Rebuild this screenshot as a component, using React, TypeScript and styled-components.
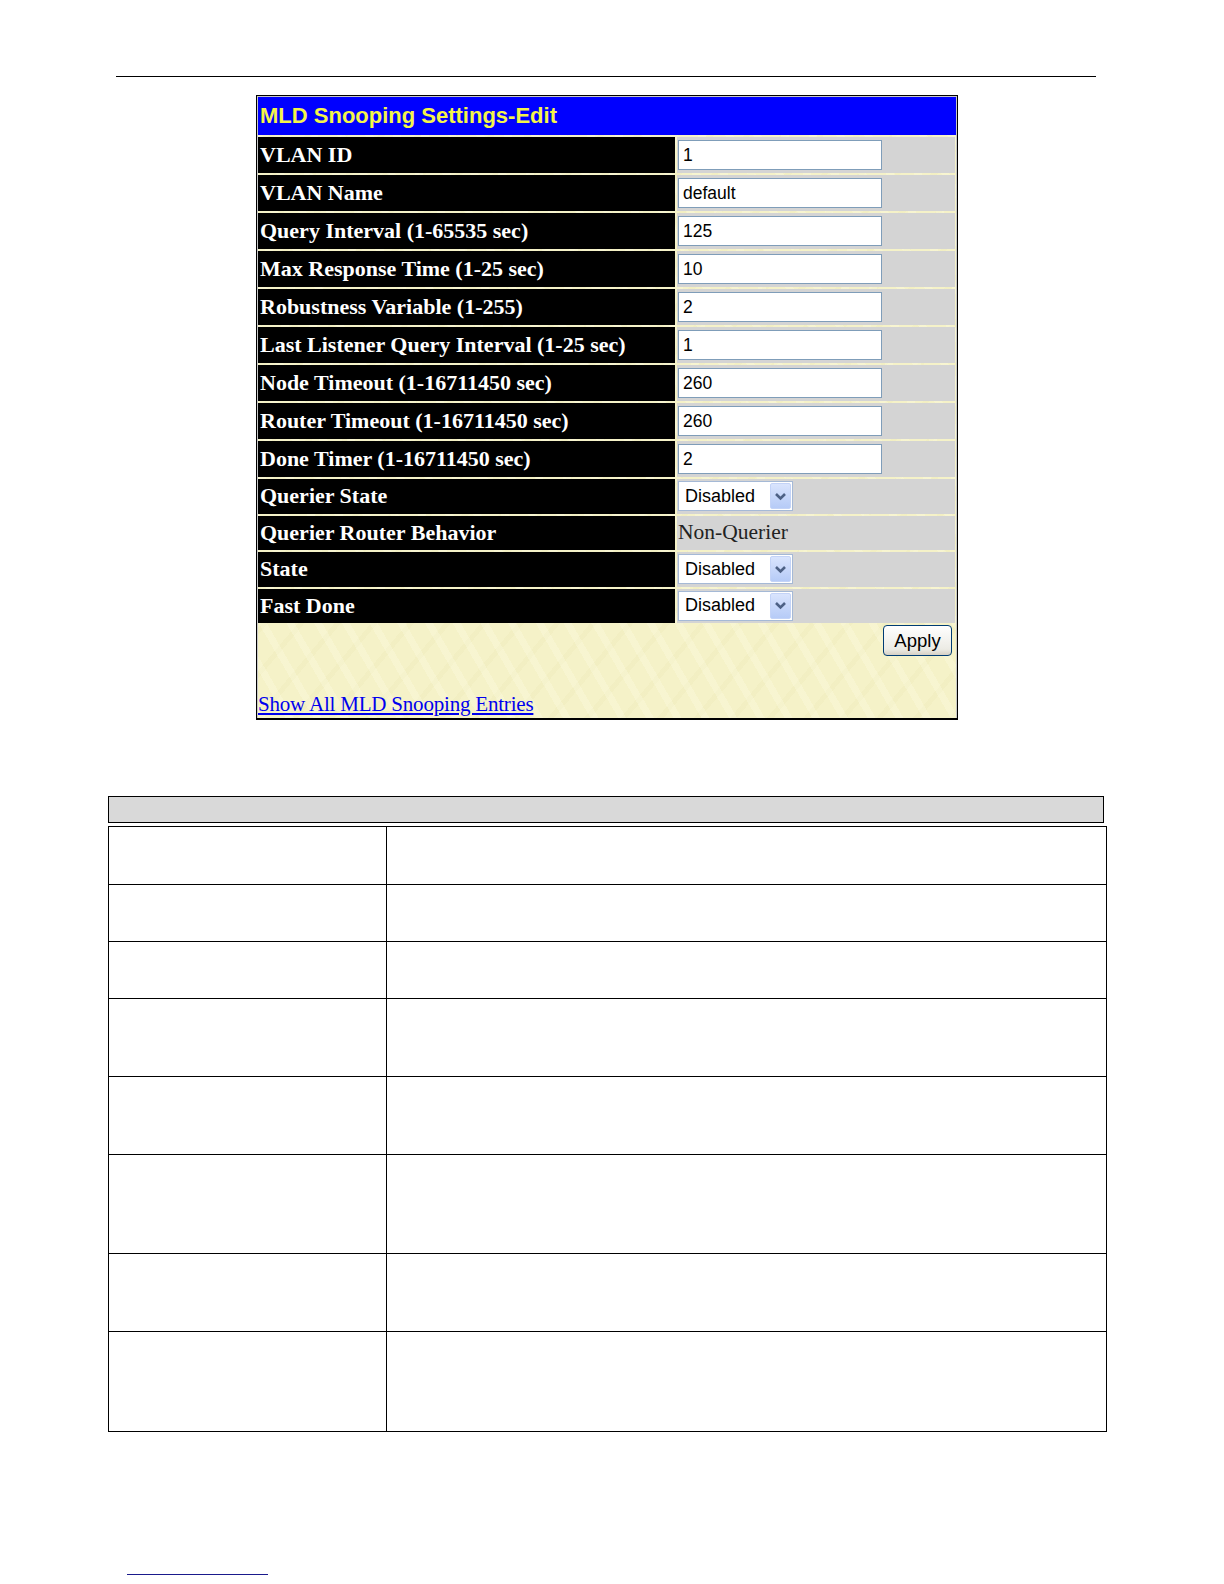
import React from 'react'
import styled, { createGlobalStyle } from 'styled-components'

const GlobalStyle = createGlobalStyle`
  html, body { margin: 0; padding: 0; background: #fff; }
  body { font-family: "Liberation Serif", "Times New Roman", serif; }
`

const Page = styled.div`
  width: 1224px;
  height: 1584px;
  position: relative;
  overflow: hidden;
  padding-top: 76px;
  box-sizing: border-box;
`

const TopRule = styled.div`
  margin-left: 116px;
  width: 980px;
  height: 0;
  border-top: 1.5px solid #000;
`

const Panel = styled.div`
  margin: 18px 0 0 256px;
  width: 700px;
  border: 1px solid #000;
  background: #f5f2c8;
`

const PanelInner = styled.div`
  border: 1px solid #c8c8c8;
  border-bottom: none;
  background:
    repeating-linear-gradient(60deg, rgba(255,255,235,0.25) 0 7px, transparent 7px 24px),
    repeating-linear-gradient(-50deg, rgba(230,225,170,0.18) 0 5px, transparent 5px 28px),
    #f5f2c8;
`

const Title = styled.div`
  height: 38px;
  background: #0000ff;
  color: #f4f44a;
  font-family: "Liberation Sans", Arial, sans-serif;
  font-weight: bold;
  font-size: 22px;
  display: flex;
  align-items: center;
  padding-left: 2px;
  margin-bottom: 2px;
`

const Grid = styled.div`
  display: grid;
  grid-template-columns: 417px 278px;
  column-gap: 2px;
  row-gap: 2px;
`

const Label = styled.div<{ $h: number }>`
  height: ${p => p.$h}px;
  background: #000;
  color: #fff;
  font-weight: bold;
  font-size: 22px;
  display: flex;
  align-items: center;
  padding-left: 2px;
  white-space: nowrap;
`

const Value = styled.div<{ $h: number }>`
  height: ${p => p.$h}px;
  background: #d4d4d4;
  display: flex;
  align-items: center;
  padding-left: 1px;
`

const TextInput = styled.div`
  width: 204px;
  height: 30px;
  box-sizing: border-box;
  background: #fff;
  border: 1px solid #7f9db9;
  font-family: "Liberation Sans", Arial, sans-serif;
  font-size: 17.5px;
  color: #000;
  display: flex;
  align-items: center;
  padding-left: 4px;
`

const Select = styled.div`
  width: 115px;
  height: 30px;
  box-sizing: border-box;
  background: #fff;
  border: 1px solid #a5b9d6;
  display: flex;
  align-items: center;
  justify-content: space-between;
  font-family: "Liberation Sans", Arial, sans-serif;
  font-size: 18px;
  padding-left: 6px;
`

const Arrow = styled.div`
  width: 21px;
  height: 26px;
  margin-right: 1px;
  border-radius: 2px;
  background: linear-gradient(#d9e4fd, #b6cbf7);
  border: 1px solid #c3d3f7;
  box-sizing: border-box;
  display: flex;
  align-items: center;
  justify-content: center;
`

const PlainValue = styled.span`
  font-size: 21.5px;
  color: #222;
`

const Footer = styled.div`
  height: 93px;
  display: flex;
  flex-direction: column;
  justify-content: space-between;
  padding-top: 2px;
`

const ApplyRow = styled.div`
  display: flex;
  justify-content: flex-end;
  padding-right: 4px;
`

const Button = styled.div`
  width: 69px;
  height: 31px;
  box-sizing: border-box;
  border: 1px solid #003c74;
  border-radius: 4px;
  background: linear-gradient(#ffffff, #ecebe4 80%, #d6d0c5);
  font-family: "Liberation Sans", Arial, sans-serif;
  font-size: 18.5px;
  display: flex;
  align-items: center;
  justify-content: center;
`

const Link = styled.a`
  font-size: 21px;
  color: #0000ee;
  text-decoration: underline;
  line-height: 1;
  margin-bottom: 3px;
  letter-spacing: -0.2px;
`

const BottomBorder = styled.div`
  border-top: 1px solid #000;
`

const DescHeader = styled.div`
  margin: 76px 0 0 108px;
  width: 996px;
  height: 27px;
  box-sizing: border-box;
  background: #d9d9d9;
  border: 1.5px solid #000;
`

const DescTable = styled.div`
  margin: 3px 0 0 108px;
  width: 999px;
  box-sizing: border-box;
  border: 1px solid #000;
  display: grid;
  grid-template-columns: 278px 1fr;
`

const DescCell = styled.div<{ $h: number; $left?: boolean; $last?: boolean }>`
  height: ${p => p.$h}px;
  box-sizing: border-box;
  border-bottom: ${p => (p.$last ? 'none' : '1px solid #000')};
  border-right: ${p => (p.$left ? '1px solid #000' : 'none')};
`

const FootLine = styled.div`
  position: absolute;
  left: 127px;
  top: 1574px;
  width: 141px;
  border-top: 1px solid #1a1a8c;
`

const Chevron = () => (
  <svg width="13" height="9" viewBox="0 0 13 9">
    <path d="M2 2 L6.5 6.5 L11 2" fill="none" stroke="#4d6185" strokeWidth="2.6" />
  </svg>
)

type Row = { label: string; kind: 'input' | 'select' | 'text'; value: string }

const rows: Row[] = [
  { label: 'VLAN ID', kind: 'input', value: '1' },
  { label: 'VLAN Name', kind: 'input', value: 'default' },
  { label: 'Query Interval (1-65535 sec)', kind: 'input', value: '125' },
  { label: 'Max Response Time (1-25 sec)', kind: 'input', value: '10' },
  { label: 'Robustness Variable (1-255)', kind: 'input', value: '2' },
  { label: 'Last Listener Query Interval (1-25 sec)', kind: 'input', value: '1' },
  { label: 'Node Timeout (1-16711450 sec)', kind: 'input', value: '260' },
  { label: 'Router Timeout (1-16711450 sec)', kind: 'input', value: '260' },
  { label: 'Done Timer (1-16711450 sec)', kind: 'input', value: '2' },
  { label: 'Querier State', kind: 'select', value: 'Disabled' },
  { label: 'Querier Router Behavior', kind: 'text', value: 'Non-Querier' },
  { label: 'State', kind: 'select', value: 'Disabled' },
  { label: 'Fast Done', kind: 'select', value: 'Disabled' },
]

const descHeights = [58, 57, 57, 78, 78, 99, 78, 99]

export default function App() {
  return (
    <Page>
      <GlobalStyle />
      <TopRule />
      <Panel>
        <PanelInner>
          <Title>MLD Snooping Settings-Edit</Title>
          <Grid>
            {rows.map(r => {
              const h = r.kind === 'input' ? 36 : 34.5
              return (
                <React.Fragment key={r.label}>
                  <Label $h={h}>{r.label}</Label>
                  <Value $h={h}>
                    {r.kind === 'input' && <TextInput>{r.value}</TextInput>}
                    {r.kind === 'select' && (
                      <Select>
                        {r.value}
                        <Arrow>
                          <Chevron />
                        </Arrow>
                      </Select>
                    )}
                    {r.kind === 'text' && <PlainValue>{r.value}</PlainValue>}
                  </Value>
                </React.Fragment>
              )
            })}
          </Grid>
          <Footer>
            <ApplyRow>
              <Button>Apply</Button>
            </ApplyRow>
            <Link href="#">Show All MLD Snooping Entries</Link>
          </Footer>
        </PanelInner>
        <BottomBorder />
      </Panel>
      <DescHeader />
      <DescTable>
        {descHeights.map((h, i) => (
          <React.Fragment key={i}>
            <DescCell $h={h} $left $last={i === descHeights.length - 1} />
            <DescCell $h={h} $last={i === descHeights.length - 1} />
          </React.Fragment>
        ))}
      </DescTable>
      <FootLine />
    </Page>
  )
}
